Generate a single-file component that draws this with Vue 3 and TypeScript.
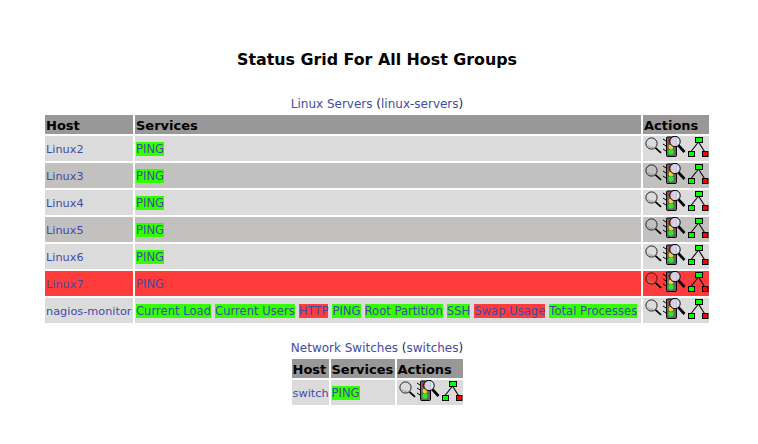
<script setup lang="ts">
type Svc = { name: string; bad?: boolean }
type Row = { host: string; down?: boolean; services: Svc[] }
const ping: Svc[] = [{ name: 'PING' }]
const linux: Row[] = [
  { host: 'Linux2', services: ping },
  { host: 'Linux3', services: ping },
  { host: 'Linux4', services: ping },
  { host: 'Linux5', services: ping },
  { host: 'Linux6', services: ping },
  { host: 'Linux7', down: true, services: ping },
  {
    host: 'nagios-monitor',
    services: [
      { name: 'Current Load' },
      { name: 'Current Users' },
      { name: 'HTTP', bad: true },
      { name: 'PING' },
      { name: 'Root Partition' },
      { name: 'SSH' },
      { name: 'Swap Usage', bad: true },
      { name: 'Total Processes' },
    ],
  },
]
const groups = [
  { title: 'Linux Servers', alias: 'linux-servers', rows: linux, cls: 'wide' },
  { title: 'Network Switches', alias: 'switches', rows: [{ host: 'switch', services: ping }] as Row[], cls: 'narrow' },
]
function rowClass(r: Row, i: number) {
  if (r.down) return 'down'
  return i % 2 === 0 ? 'even' : 'odd'
}
</script>

<template>
  <div class="page">
    <h1 class="title">Status Grid For All Host Groups</h1>
    <section v-for="g in groups" :key="g.alias" class="group" :class="g.cls">
      <div class="caption"><a>{{ g.title }}</a> (<a>{{ g.alias }}</a>)</div>
      <table class="grid">
        <thead>
          <tr><th class="c-host">Host</th><th class="c-svc">Services</th><th class="c-act">Actions</th></tr>
        </thead>
        <tbody>
          <tr v-for="(r, i) in g.rows" :key="r.host" :class="rowClass(r, i)">
            <td class="host"><a>{{ r.host }}</a></td>
            <td class="svcs">
              <span v-for="s in r.services" :key="s.name" class="svc" :class="{ bad: s.bad || r.down }">{{ s.name }}</span>
            </td>
            <td class="acts">
              <div class="icons">
                <svg width="18" height="20" viewBox="0 0 18 20">
                  <circle cx="6.5" cy="7.5" r="5.6" fill="none" stroke="#222" stroke-width="1" />
                  <path d="M3.2 9.5a4.2 4.2 0 0 0 5 1.6" fill="none" stroke="#999" stroke-width="1" />
                  <path d="M10.5 11.8l5.5 5" stroke="#000" stroke-width="1.8" />
                </svg>
                <svg width="23" height="22" viewBox="0 0 23 22">
                  <rect x="3.5" y="1" width="10" height="19.5" rx="1" fill="#666" stroke="#000" />
                  <path d="M0 3l3 2M0 8l3 2M0 13l3 2" stroke="#000" />
                  <circle cx="8" cy="5" r="2.6" fill="#f00" />
                  <circle cx="8" cy="11" r="2.4" fill="#fc2" />
                  <circle cx="8" cy="16" r="2.7" fill="#2e2" />
                  <circle cx="12" cy="5.5" r="5.2" fill="#e4e8ff" fill-opacity=".85" stroke="#000" />
                  <path d="M15.5 9.5l6 6.5" stroke="#000" stroke-width="2.6" />
                </svg>
                <svg width="22" height="22" viewBox="0 0 22 22">
                  <path d="M11.5 6L4 15.5M11.5 6l6 9.5" stroke="#111" stroke-width="1.2" fill="none" />
                  <rect x="8.5" y="1.5" width="7" height="5" fill="#0f0" stroke="#000" />
                  <rect x="1.5" y="15.5" width="6" height="5" fill="#0f0" stroke="#000" />
                  <rect x="15.5" y="15.5" width="5.5" height="5" fill="#f00" stroke="#000" />
                </svg>
              </div>
            </td>
          </tr>
        </tbody>
      </table>
    </section>
  </div>
</template>

<style scoped>
.page {
  width: 754px;
  height: 444px;
  overflow: hidden;
  font-family: Verdana, "DejaVu Sans", sans-serif;
  font-size: 11.6px;
  color: #000;
  padding-top: 51px;
  box-sizing: border-box;
}
.title {
  margin: 0 0 28px;
  font-size: 15.85px;
  line-height: 18px;
  font-weight: bold;
  text-align: center;
}
.group { margin-bottom: 16px; }
.caption {
  text-align: center;
  font-size: 12px;
  line-height: 15px;
  margin-bottom: 1px;
  color: #1d2350;
}
a { color: #3f4ba8; }
.grid {
  border-collapse: separate;
  border-spacing: 2px;
  table-layout: fixed;
  margin: 0 auto;
}
.wide .grid { width: 668px; }
.narrow .grid { width: 175px; }
.c-act { width: 66px; }
.wide .c-host { width: 88px; }
.narrow .c-host { width: 37px; }
.narrow .c-svc { width: 64px; }
th {
  background: #999797;
  text-align: left;
  font-size: 13px;
  font-weight: bold;
  height: 19px;
  padding: 2px 1px 0;
  line-height: 17px;
  box-sizing: border-box;
  white-space: nowrap;
  overflow: hidden;
}
td {
  height: 25px;
  padding: 1px 1px 0;
  box-sizing: border-box;
  white-space: nowrap;
}
.even td { background: #dbdbdb; }
.odd td { background: #c3c0c0; }
.down td { background: #ff3b3b; }
.host { vertical-align: middle; font-size: 11.3px; }
.svcs { vertical-align: middle; }
.svc {
  background: #33ff00;
  color: #3f4ba8;
  display: inline-block;
  line-height: 14px;
  margin-right: 4px;
  vertical-align: middle;
}
.svc.bad { background: #ff3b3b; }
td.acts { vertical-align: top; padding: 0 0 0 2px; }
.icons { display: flex; height: 25px; overflow: hidden; }
.icons svg { flex: none; }
.icons svg + svg + svg { margin-left: 1px; }
</style>
